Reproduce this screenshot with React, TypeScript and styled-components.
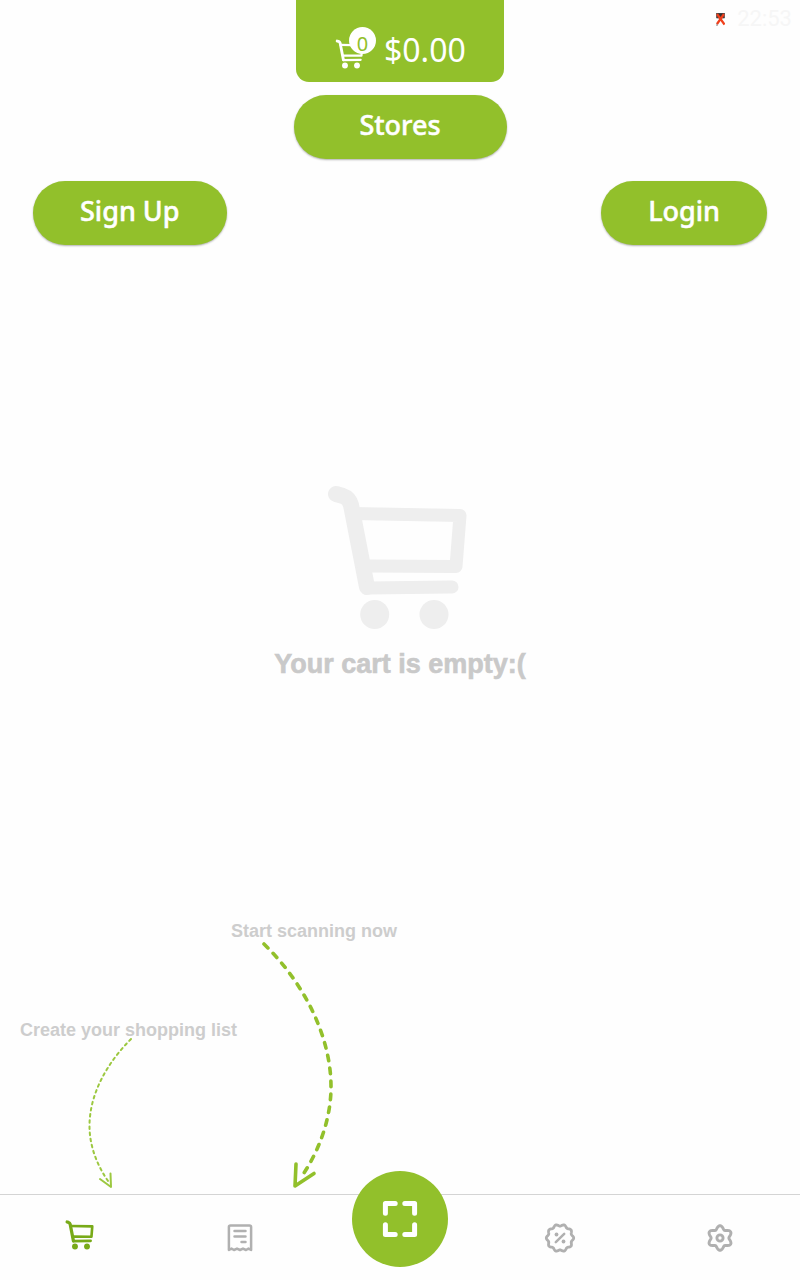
import React from "react";
import styled, { createGlobalStyle } from "styled-components";

const GREEN = "#92c02b";

const GlobalStyle = createGlobalStyle`
  *, *::before, *::after { box-sizing: border-box; }
  body {
    margin: 0;
    background: #fefefe;
    font-family: "Noto Sans", sans-serif;
  }
  svg { display: block; }
`;

const Screen = styled.div`
  min-height: 100vh;
  display: flex;
  flex-direction: column;
`;

const Header = styled.header`
  position: relative;
  display: flex;
  flex-direction: column;
  align-items: center;
`;

const StatusBar = styled.div`
  position: absolute;
  top: 6px;
  right: 8px;
  display: flex;
  align-items: center;
  gap: 12px;
  color: #f6f6f6;
  font: 22px/26px Roboto, sans-serif;
`;

const CartTotal = styled.div`
  width: 208px;
  height: 82px;
  padding: 14px 0 0 39px;
  display: flex;
  align-items: center;
  gap: 8px;
  border-radius: 0 0 13px 13px;
  background: ${GREEN};
  color: #fff;
`;

const CartCounter = styled.div`
  position: relative;
  width: 41px;
  height: 42px;
  display: flex;
  align-items: flex-end;
`;

const Badge = styled.span`
  position: absolute;
  top: 0;
  right: 0;
  width: 27px;
  height: 27px;
  border-radius: 50%;
  background: #fff;
  color: ${GREEN};
  font-size: 20px;
  line-height: 34px;
  text-align: center;
`;

const Amount = styled.output`
  padding-top: 4px;
  font-size: 32px;
  line-height: 44px;
`;

const PillButton = styled.button<{ $wide?: boolean }>`
  height: 64px;
  min-width: ${(p) => (p.$wide ? 213 : 165)}px;
  padding: 0 47px 4px;
  border: 0;
  border-radius: 32px;
  background: ${GREEN};
  box-shadow: 0 1px 2px rgba(0, 0, 0, 0.3);
  color: #fff;
  font: 500 27px/38px "Noto Sans", sans-serif;
  -webkit-text-stroke: 0.5px #fff;
`;

const StoresRow = styled.div`
  margin-top: 13px;
`;

const AccountRow = styled.div`
  width: 100%;
  margin-top: 22px;
  padding: 0 33px;
  display: flex;
  justify-content: space-between;
`;

const EmptyCart = styled.main`
  flex: 1;
  display: flex;
  flex-direction: column;
  align-items: center;
  justify-content: center;
  padding-bottom: 5px;
`;

const EmptyPicture = styled.div`
  padding-right: 6px;
`;

const EmptyText = styled.p`
  margin: 16px 0 0;
  color: #c9c9c9;
  font: bold 27px/32px "Liberation Sans", Arial, sans-serif;
  -webkit-text-stroke: 0.6px #c9c9c9;
`;

const Hints = styled.section`
  display: flex;
  align-items: flex-end;
  padding: 0 20px 6px;
`;

const Hint = styled.div<{ $arrowInset: number }>`
  width: 211px;
  white-space: nowrap;
  svg { margin-left: ${(p) => p.$arrowInset}px; overflow: visible; }
`;

const HintText = styled.p`
  margin: 0;
  color: #cdcdcd;
  font: bold 18px/16px "Liberation Sans", Arial, sans-serif;
`;

const TabBar = styled.nav`
  height: 86px;
  display: grid;
  grid-template-columns: repeat(5, 1fr);
  border-top: 1px solid #d4d4d4;
`;

const Tab = styled.a<{ $active?: boolean }>`
  display: flex;
  align-items: center;
  justify-content: center;
  padding: ${(p) => (p.$active ? "0 2px 6px 0" : "0")};
  color: ${(p) => (p.$active ? "#78aa18" : "#b0b0b0")};
`;

const ScanButton = styled.button`
  justify-self: center;
  width: 96px;
  height: 96px;
  margin-top: -24px;
  padding: 0;
  display: flex;
  align-items: center;
  justify-content: center;
  border: 0;
  border-radius: 50%;
  background: ${GREEN};
  color: #fff;
`;

function CartIcon({ width, height, weight, color }: { width: number; height: number; weight: number; color: string }) {
  return (
    <svg width={width} height={height} viewBox="0 0 142 148" fill="none" stroke={color} strokeWidth={weight} strokeLinecap="round" strokeLinejoin="round" aria-hidden="true">
      <path d="M10 10L17 12Q23 14 25 21L41 103" strokeWidth={weight + 3} />
      <path d="M41 104L126 103" />
      <path d="M27 29.5L134 31.5L130 82.5L38 82" />
      <circle cx="48.7" cy="130.5" r="14.5" fill={color} stroke="none" />
      <circle cx="108" cy="130.5" r="14.5" fill={color} stroke="none" />
    </svg>
  );
}

/* Closed wavy outline around the centre of a 32px box. */
function scallop(lobes: number, radius: number, depth: number) {
  const points: string[] = [];
  for (let i = 0; i < 120; i++) {
    const a = (i / 120) * Math.PI * 2;
    const r = radius + depth * Math.cos(lobes * a);
    points.push(`${(16 + r * Math.cos(a)).toFixed(2)} ${(16 + r * Math.sin(a)).toFixed(2)}`);
  }
  return `M${points.join("L")}Z`;
}

const BADGE_OUTLINE = scallop(10, 12.8, 0.9);
const GEAR_OUTLINE = scallop(6, 10.6, 1.7);

function ReceiptIcon() {
  return (
    <svg width="32" height="32" viewBox="0 0 32 32" fill="none" stroke="currentColor" strokeWidth="2.5" strokeLinecap="round" strokeLinejoin="round" aria-hidden="true">
      <path d="M4.9 28V5Q4.9 3.4 6.5 3.4H25.5Q27.1 3.4 27.1 5V28L24.5 26.6L22 28L19 26.6L16 28L13 26.6L10 28L7.5 26.6Z" />
      <path d="M10.5 9H21.5M10.5 14.4H21.5M17.5 20H21.5" />
    </svg>
  );
}

function OffersIcon() {
  return (
    <svg width="32" height="32" viewBox="0 0 32 32" fill="none" stroke="currentColor" strokeWidth="2.8" strokeLinecap="round" strokeLinejoin="round" aria-hidden="true">
      <path d={BADGE_OUTLINE} />
      <path d="M11.8 20.2L20.2 11.8" strokeWidth="2.5" />
      <circle cx="12.5" cy="12.5" r="1.9" fill="currentColor" stroke="none" />
      <circle cx="19.5" cy="19.5" r="1.9" fill="currentColor" stroke="none" />
    </svg>
  );
}

function SettingsIcon() {
  return (
    <svg width="32" height="32" viewBox="0 0 32 32" fill="none" stroke="currentColor" strokeWidth="2.9" strokeLinejoin="round" aria-hidden="true">
      <path d={GEAR_OUTLINE} transform="rotate(90 16 16)" />
      <circle cx="16" cy="16" r="3.1" />
    </svg>
  );
}

function ScanIcon() {
  return (
    <svg width="36" height="38" viewBox="0 0 36 38" fill="none" stroke="currentColor" strokeWidth="5" strokeLinecap="round" strokeLinejoin="round" aria-hidden="true">
      <path d="M3.4 13.2V3.4H13.2M22.8 3.4H32.6V13.2M32.6 24.8V34.6H22.8M13.2 34.6H3.4V24.8" />
    </svg>
  );
}

function NoSignalIcon() {
  return (
    <svg width="9" height="13" viewBox="0 0 9 13" fill="none" aria-hidden="true">
      <path d="M0.5 0H8.5V5H0.5ZM1 10V13" fill="#333" stroke="#555" strokeWidth="0.8" />
      <path d="M1 1L8.5 11.5M8 1L1 11" stroke="#f0401c" strokeWidth="2.2" />
    </svg>
  );
}

export default function App() {
  return (
    <Screen>
      <GlobalStyle />
      <Header>
        <StatusBar>
          <NoSignalIcon />
          <time>22:53</time>
        </StatusBar>
        <CartTotal>
          <CartCounter>
            <CartIcon width={29} height={30} weight={11} color="#fff" />
            <Badge>0</Badge>
          </CartCounter>
          <Amount>$0.00</Amount>
        </CartTotal>
        <StoresRow>
          <PillButton type="button" $wide>Stores</PillButton>
        </StoresRow>
        <AccountRow>
          <PillButton type="button">Sign Up</PillButton>
          <PillButton type="button">Login</PillButton>
        </AccountRow>
      </Header>

      <EmptyCart>
        <EmptyPicture>
          <CartIcon width={142} height={148} weight={13} color="#eeeeee" />
        </EmptyPicture>
        <EmptyText>Your cart is empty:(</EmptyText>
      </EmptyCart>

      <Hints>
        <Hint $arrowInset={68}>
          <HintText>Create your shopping list</HintText>
          <svg width="44" height="150" viewBox="0 0 44 150" fill="none" stroke="#9cc840" strokeWidth="2" strokeLinecap="round" aria-hidden="true">
            <path d="M43 1C19 25 1.5 56 1.5 88C1.5 108 9 127 20 143" strokeDasharray="2.6 3.6" />
            <path d="M12 141L23 149L22.5 135.5" strokeLinejoin="round" />
          </svg>
        </Hint>
        <Hint $arrowInset={31}>
          <HintText>Start scanning now</HintText>
          <svg width="72" height="249" viewBox="0 0 72 249" fill="none" stroke={GREEN} strokeWidth="3.6" strokeLinecap="round" aria-hidden="true">
            <path d="M2 5C40 42 69 95 69 148C69 180 57 212 40 237" strokeDasharray="5.6 7.4" />
            <path d="M34 225L33 247L52 234.5" strokeLinejoin="round" />
          </svg>
        </Hint>
      </Hints>

      <TabBar>
        <Tab href="#cart" $active aria-label="Cart">
          <CartIcon width={29} height={30} weight={13} color="currentColor" />
        </Tab>
        <Tab href="#lists" aria-label="Shopping lists"><ReceiptIcon /></Tab>
        <ScanButton type="button" aria-label="Scan"><ScanIcon /></ScanButton>
        <Tab href="#offers" aria-label="Offers"><OffersIcon /></Tab>
        <Tab href="#settings" aria-label="Settings"><SettingsIcon /></Tab>
      </TabBar>
    </Screen>
  );
}
